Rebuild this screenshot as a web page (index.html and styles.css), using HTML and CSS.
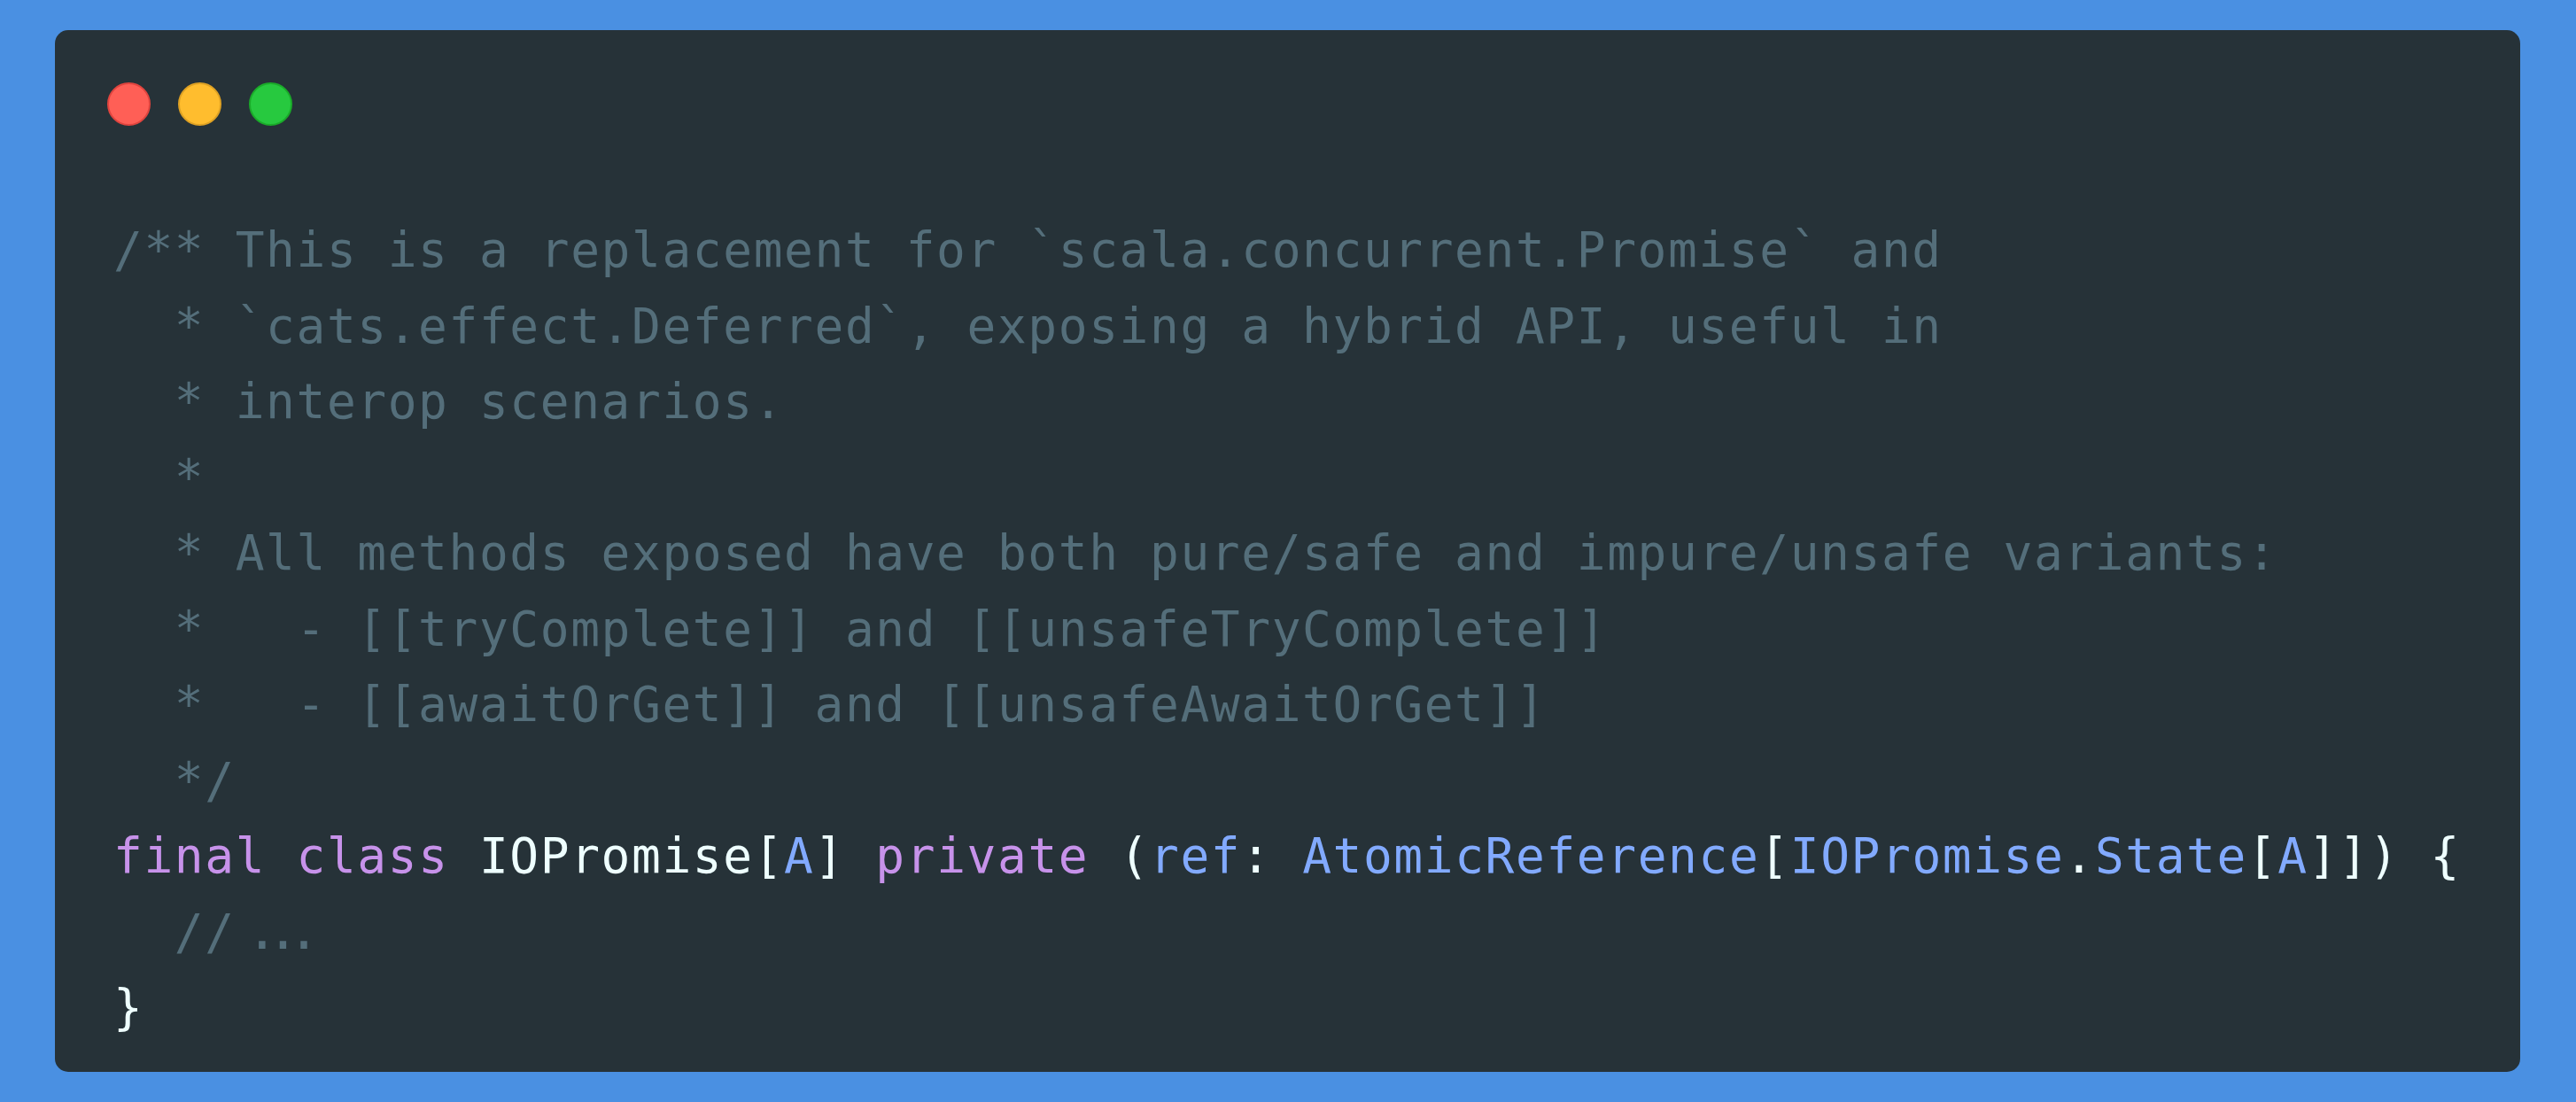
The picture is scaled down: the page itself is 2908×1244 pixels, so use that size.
FILE: index.html
```html
<!DOCTYPE html>
<html lang="en">
<head>
<meta charset="utf-8">
<title>IOPromise</title>
<link rel="stylesheet" href="styles.css">
</head>
<body>
<div class="window">
  <div class="controls">
    <span class="dot red"></span>
    <span class="dot yellow"></span>
    <span class="dot green"></span>
  </div>
<pre class="code"><span class="c">/** This is a replacement for `scala.concurrent.Promise` and
  * `cats.effect.Deferred`, exposing a hybrid API, useful in
  * interop scenarios.
  *
  * All methods exposed have both pure/safe and impure/unsafe variants:
  *   - [[tryComplete]] and [[unsafeTryComplete]]
  *   - [[awaitOrGet]] and [[unsafeAwaitOrGet]]
  */</span>
<span class="k">final</span> <span class="k">class</span> IOPromise[<span class="t">A</span>] <span class="k">private</span> (<span class="t">ref</span>: <span class="t">AtomicReference</span>[<span class="t">IOPromise</span>.<span class="t">State</span>[<span class="t">A</span>]]) {
  <span class="c">// <span class="ell">…</span></span>
}</pre>
</div>
</body>
</html>
```
FILE: styles.css
```css
html, body {
  margin: 0;
  padding: 0;
}

body {
  background: #4a90e2;
  padding: 34px 63px 34px 62px;
  box-sizing: border-box;
  width: 2908px;
  height: 1244px;
}

.window {
  background: #263238;
  border-radius: 15px;
  padding: 59px 0 28px 0;
  box-sizing: border-box;
  height: 1176px;
}

.controls {
  display: flex;
  gap: 31px;
  padding-left: 59px;
  height: 49px;
}

.dot {
  width: 49px;
  height: 49px;
  border-radius: 50%;
  box-sizing: border-box;
  border: 2px solid transparent;
}

.red {
  background: #ff5f56;
  border-color: #e0443e;
}

.yellow {
  background: #ffbd2e;
  border-color: #dea123;
}

.green {
  background: #27c93f;
  border-color: #1aab29;
}

.code {
  margin: 98px 0 0 0;
  padding-left: 66px;
  font-family: "DejaVu Sans Mono", "Liberation Mono", monospace;
  font-size: 54.5px;
  letter-spacing: 1.6px;
  line-height: 85.55px;
  color: #eeffff;
  white-space: pre;
}

.c {
  color: #546e7a;
}

.k {
  color: #c792ea;
}

.t {
  color: #82aaff;
}

.ell {
  font-family: "DejaVu Sans", sans-serif;
  font-size: 1.3em;
  line-height: 0;
  letter-spacing: 0;
  margin-left: -16px;
}
```
